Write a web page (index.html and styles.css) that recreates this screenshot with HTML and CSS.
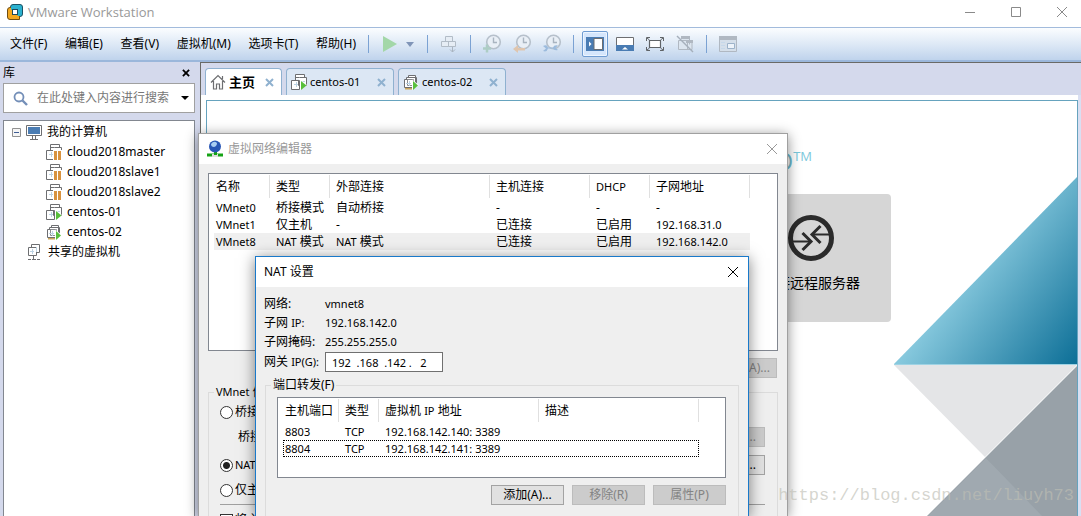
FILE: index.html
```html
<!DOCTYPE html>
<html lang="zh-CN">
<head>
<meta charset="utf-8">
<title>VMware Workstation</title>
<link rel="stylesheet" href="styles.css">
</head>
<body>
<svg class="defs" aria-hidden="true">
  <symbol id="vm" viewBox="0 0 16 16">
    <path d="M4.500 6V.5h9v3M8.500 3.500h7v8h-8v-5M4.500 3.500h4M.5 6.500h8v9h-8z" fill="#fff" stroke="#6d6e71"/>
    <path d="M3 10.500h4M5.500 8v5M10 7.500h4" stroke="#bcd3e4" fill="none"/>
  </symbol>
  <symbol id="vm-pause" viewBox="0 0 16 16">
    <use href="#vm"/><path d="M7 6h9v10H7z" fill="#fff"/><path d="M8 7h3v9H8zM12 7h3v9h-3z" fill="#d8923e"/>
  </symbol>
  <symbol id="vm-run" viewBox="0 0 16 16">
    <use href="#vm"/><path d="M9 5.500 16 11l-7 5z" fill="#fff"/><path d="M10 7l5.500 4.500L10 16z" fill="#58bf3c"/>
  </symbol>
  <symbol id="vm-team" viewBox="0 0 16 16">
    <path d="M5.500 3.500v-2h7v9M3.500 5.500v-2h10v8M1.500 5.500h8v8h-8z" fill="#fff" stroke="#6d6e71"/>
    <path d="M4.500 5.500h6v6h-6z" fill="none" stroke="#8a8c8f"/>
    <path d="M3 9.500h5M6.500 7v5" stroke="#bcd3e4"/><path d="M2 14h7v1.500H2z" fill="#c9a55c"/>
    <path d="M9 5.500 16 11l-7 5z" fill="#fff"/><path d="M10 7l5 4.500L10 16z" fill="#58bf3c"/>
  </symbol>
  <symbol id="clock" viewBox="0 0 20 20">
    <circle cx="11.500" cy="8" r="6.800" fill="#e9eff6" stroke="#b6c0cb" stroke-width="1.600"/><path d="M11.500 3.500V8.500H15" fill="none" stroke="#a9b4c0" stroke-width="1.400"/>
  </symbol>
  <symbol id="cross" viewBox="0 0 12 12"><path d="M1 1l10 10M11 1L1 11" fill="none" stroke="currentColor"/></symbol>
  <symbol id="fat-cross" viewBox="0 0 9 9"><path d="M1 1l7 7M8 1L1 8" fill="none" stroke="currentColor" stroke-width="2"/></symbol>
</svg>

<div class="app">
  <header class="titlebar">
    <svg class="logo" viewBox="0 0 16 16" width="16" height="16">
      <rect x="3.500" y=".5" width="12" height="12" rx="2.500" fill="#2bb1cf" stroke="#1b5264"/>
      <path d="M3 3.500h9.500V15.500H3q-2.500 0-2.500-2.500V6q0-2.500 2.500-2.500z" fill="#f3a81f" stroke="#704d12"/>
      <path d="M4 4.500h8V12" fill="none" stroke="#2bb1cf" stroke-width="3"/>
      <rect x="5.500" y="5.500" width="5" height="5" fill="#fff" stroke="#1d4a5d"/>
    </svg>
    <h1>VMware Workstation</h1>
    <div class="wincontrols">
      <button aria-label="最小化"><svg width="12" height="12"><path d="M1 6.500h10" stroke="currentColor"/></svg></button>
      <button aria-label="最大化"><svg width="12" height="12"><path d="M1.500 1.500h9v9h-9z" fill="none" stroke="currentColor"/></svg></button>
      <button aria-label="关闭"><svg width="12" height="12"><use href="#cross"/></svg></button>
    </div>
  </header>

  <div class="toolbar">
    <nav class="menu">
      <button>文件(F)</button><button>编辑(E)</button><button>查看(V)</button><button>虚拟机(M)</button><button>选项卡(T)</button><button>帮助(H)</button>
    </nav>
    <i class="sep"></i>
    <button class="tool" aria-label="启动"><svg width="16" height="18"><path d="M1 1l14 8L1 17z" fill="#a3d7a8"/></svg></button>
    <button class="tool caret" aria-label="电源选项"><svg width="8" height="5"><path d="M0 0h8L4 5z" fill="#8095b8"/></svg></button>
    <i class="sep"></i>
    <button class="tool" aria-label="发送按键"><svg width="18" height="18"><path d="M5.500 1.500h7v5h-7zM1.500 6.500h7v5h-7zM8.500 6.500h7v5h-7z" fill="#e6edf5" stroke="#b2bcc7"/><path d="M12.500 12v5M10 14.500l2.500 2.500 2.500-2.500" fill="none" stroke="#a9b4c0"/></svg></button>
    <i class="sep"></i>
    <button class="tool" aria-label="拍摄快照"><svg width="20" height="20"><use href="#clock"/><path d="M1 14.500h8M5 10.500v8" stroke="#adcdc5" stroke-width="2.500"/></svg></button>
    <button class="tool" aria-label="恢复快照"><svg width="20" height="20"><use href="#clock"/><path d="M1 15l5-4v3h7v2.500H6V19z" fill="#dfc5ae"/></svg></button>
    <button class="tool" aria-label="管理快照"><svg width="20" height="20"><use href="#clock"/><path d="M1 12q4-2 5 1.500h5q1-3 5-2l-2.500 2.500 2.500 2q-4 1-5-1.500H6q-1 4-5 2.500l3-2.500z" fill="#9cbbdd"/></svg></button>
    <i class="sep"></i>
    <button class="tool active" aria-label="显示库"><svg width="18" height="14"><path d="M0 0h18v14H0z" fill="#4a7cb3"/><path d="M8 1.500h8.500v11H8z" fill="#fff" stroke="#6d6e71" stroke-width="1"/><path d="M3 4.500l2.500 2.500L3 9.500z" fill="#fff"/></svg></button>
    <button class="tool" aria-label="显示缩略图"><svg width="18" height="14"><path d="M.5.500h17v13H.5z" fill="#fff" stroke="#6d6e71"/><path d="M0 8h18v6H0z" fill="#4a7cb3"/><path d="M6 12.500L9 10l3 2.500z" fill="#fff"/></svg></button>
    <button class="tool" aria-label="全屏"><svg width="18" height="14"><path d="M3.500 3.500h11v7h-11z" fill="#fff" stroke="#606468" stroke-width="1.200"/><path d="M.5 4V.5H4M14 .5h3.500V4M.5 10v3.500H4M14 13.500h3.500V10M1 1l2.500 2M17 1l-2.500 2M1 13l2.500-2M17 13l-2.500-2" fill="none" stroke="#606468"/></svg></button>
    <button class="tool" aria-label="Unity"><svg width="18" height="18"><path d="M5.500 4V1.500h8v8M2.500 5.500h9v9h-9zM9 5.500h7v9h-5" fill="#dce5ef" stroke="#b0b8c2"/><path d="M5 1h9v3H5zM10 5h7v3h-7z" fill="#b0b8c2"/><path d="M1 1l16 16" stroke="#a5afbb" stroke-width="1.500"/></svg></button>
    <i class="sep"></i>
    <button class="tool" aria-label="控制台视图"><svg width="18" height="16"><path d="M.5.500h17v15H.5z" fill="#d5dfea" stroke="#b0b8c2"/><path d="M0 0h18v4H0z" fill="#b0b8c2"/><path d="M2 6.500h4M2 9.500h4M2 12.500h4" stroke="#c6d8ea"/><path d="M8.500 7.500h7v5h-7z" fill="#edf3fa" stroke="#9db3ca"/></svg></button>
  </div>

  <div class="workspace">
    <aside class="library">
      <div class="library-head"><h2>库</h2><button aria-label="关闭库"><svg width="8" height="8" viewBox="0 0 9 9"><use href="#fat-cross"/></svg></button></div>
      <div class="search">
        <svg width="15" height="15"><circle cx="6" cy="6" r="4.500" fill="none" stroke="#748fb8" stroke-width="1.800"/><path d="M9.500 9.500l4.500 4.500" stroke="#748fb8" stroke-width="2.400"/></svg>
        <input type="text" aria-label="搜索" placeholder="在此处键入内容进行搜索">
        <button aria-label="搜索选项"><svg width="8" height="4"><path d="M0 0h8L4 4z"/></svg></button>
      </div>
      <ul class="tree">
        <li class="root"><button class="expander" aria-label="折叠"><svg width="9" height="9"><path d="M.5.500h8v8h-8z" fill="#f5f5f5" stroke="#919191"/><path d="M2 4.500h5" stroke="#3e5c93"/></svg></button><svg width="16" height="16"><path d="M.5 1.500h15v10H.5z" fill="#fff" stroke="#6d6e71"/><path d="M2 3h12v7H2z" fill="#4a7cb3"/><path d="M6.500 12v3M9.500 12v3M4 15.500h8" stroke="#6d6e71"/></svg>我的计算机</li>
        <li class="child"><svg width="16" height="16"><use href="#vm-pause"/></svg>cloud2018master</li>
        <li class="child"><svg width="16" height="16"><use href="#vm-pause"/></svg>cloud2018slave1</li>
        <li class="child"><svg width="16" height="16"><use href="#vm-pause"/></svg>cloud2018slave2</li>
        <li class="child"><svg width="16" height="16"><use href="#vm-run"/></svg>centos-01</li>
        <li class="child"><svg width="16" height="16"><use href="#vm-team"/></svg>centos-02</li>
        <li class="root shared"><svg width="16" height="16"><path d="M4.500 3V.5h8v8h-3M1.500 3.500h8v8h-8z" fill="#fff" stroke="#6d6e71"/><path d="M3 7.500h4M5.500 5v5M9.500 3v5" stroke="#bcd3e4"/><path d="M6.500 12v3M1 15.500h3M5 15.500h4M10 15.500h3" stroke="#6d6e71"/></svg>共享的虚拟机</li>
      </ul>
    </aside>

    <main class="main">
      <div class="tabs">
        <div class="tab home-tab"><svg width="16" height="16"><path d="M1 8.500L8 1.500l7 7M3.500 7v8h3v-5h3v5h3V7M12.500 5V2" fill="none" stroke="#6d6e71" stroke-width="1.200"/></svg><span>主页</span><button aria-label="关闭主页"><svg width="9" height="9"><use href="#fat-cross"/></svg></button></div>
        <div class="tab"><svg width="16" height="16"><use href="#vm-run"/></svg><span>centos-01</span><button aria-label="关闭 centos-01"><svg width="9" height="9"><use href="#fat-cross"/></svg></button></div>
        <div class="tab"><svg width="16" height="16"><use href="#vm-team"/></svg><span>centos-02</span><button aria-label="关闭 centos-02"><svg width="9" height="9"><use href="#fat-cross"/></svg></button></div>
      </div>
      <div class="page">
        <section class="home">
          <div class="brand">PRO<sup>TM</sup></div>
          <button class="tile">
            <svg width="48" height="48"><circle cx="24" cy="24" r="20.500" fill="none" stroke="#2b2b2b" stroke-width="5"/><path d="M5 27.500h18M43 20.500H25" stroke="#2b2b2b" stroke-width="2"/><path d="M15.500 19l8.500 8.500-8.500 8.500M33.500 12L25 20.500l8.500 8.500" fill="none" stroke="#2b2b2b" stroke-width="3"/></svg>
            连接远程服务器
          </button>
          <svg class="art" width="183" height="600">
            <defs>
              <linearGradient id="sea" gradientUnits="userSpaceOnUse" x1="60" y1="110" x2="183" y2="200"><stop offset="0" stop-color="#86c8dd"/><stop offset="1" stop-color="#066a93"/></linearGradient>
              <clipPath id="low"><path d="M92 281L411 600h-639z"/></clipPath>
            </defs>
            <path d="M183 0v187H0z" fill="url(#sea)"/><path d="M0 187.500h183" stroke="#9fd3e4"/>
            <path d="M0 188h183L91 280z" fill="#e4e5e7"/>
            <path d="M183 189v411h-411z" fill="#98a1a8"/><path d="M92 281L-228 600H400z" fill="#a0a9b0" clip-path="url(#low)"/>
          </svg>
        </section>
      </div>
    </main>
  </div>

  <section class="dialog editor" aria-label="虚拟网络编辑器">
    <header class="dialog-title"><svg width="16" height="18"><path d="M0 13.500h16v3H0z" fill="#15a315"/><path d="M5 14h6v3H5z" fill="#ddd"/><path d="M7 11h3v4H7z" fill="#15a315"/><circle cx="8" cy="6.500" r="6" fill="#2856b5"/><path d="M4 4q3-4 6-1 0 3-3 4-3 0-3-3z" fill="#a9cdf2"/></svg><h2>虚拟网络编辑器</h2><button aria-label="关闭"><svg width="12" height="12"><use href="#cross"/></svg></button></header>
    <div class="dialog-body">
      <div class="list networks">
        <table>
          <colgroup><col class="w56"><col class="w60"><col class="w160"><col class="w100"><col class="w60"><col class="w100"></colgroup>
          <thead><tr><th>名称</th><th>类型</th><th>外部连接</th><th>主机连接</th><th class="latin">DHCP</th><th>子网地址</th></tr></thead>
          <tbody>
            <tr><td class="latin">VMnet0</td><td>桥接模式</td><td>自动桥接</td><td>-</td><td>-</td><td>-</td></tr>
            <tr><td class="latin">VMnet1</td><td>仅主机</td><td>-</td><td>已连接</td><td>已启用</td><td class="latin">192.168.31.0</td></tr>
            <tr class="selected"><td class="latin">VMnet8</td><td><span class="latin">NAT</span> 模式</td><td><span class="latin">NAT</span> 模式</td><td>已连接</td><td>已启用</td><td class="latin">192.168.142.0</td></tr>
          </tbody>
        </table>
      </div>
      <div class="actions"><button class="btn" disabled>更改设置(A)...</button></div>
      <fieldset>
        <legend><span class="latin">VMnet 信息</span></legend>
        <div class="mode r24"><label><input type="radio" name="mode">桥接模式</label></div>
        <div class="mode r26"><label class="indent" for="bridge">桥接到</label><button id="bridge" class="btn" disabled>自动设置...</button></div>
        <div class="mode r30"><label><input type="radio" name="mode" checked><span class="latin">NAT 模式</span></label><button class="btn"><span class="latin">NAT</span> 设置...</button></div>
        <div class="mode r20"><label><input type="radio" name="mode">仅主机模式</label></div>
        <hr>
        <div class="mode r20"><label><input type="checkbox">将主机适配器连接到此网络</label></div>
      </fieldset>
    </div>
  </section>

  <section class="dialog nat" aria-label="NAT 设置">
    <header class="dialog-title"><h2>NAT 设置</h2><button aria-label="关闭"><svg width="12" height="12"><use href="#cross"/></svg></button></header>
    <div class="dialog-body">
      <div class="fields">
        <span>网络:</span><span class="latin">vmnet8</span>
        <span>子网 <span class="latin">IP:</span></span><span class="latin">192.168.142.0</span>
        <span>子网掩码:</span><span class="latin">255.255.255.0</span>
        <label for="gateway">网关 <span class="latin">IP(G):</span></label><input id="gateway" type="text" value="192  .168  .142 .   2">
      </div>
      <fieldset>
        <legend>端口转发(F)</legend>
        <div class="list ports">
          <table>
            <colgroup><col class="w56"><col class="w40"><col class="w160"><col class="w160"></colgroup>
            <thead><tr><th>主机端口</th><th>类型</th><th>虚拟机 <span class="latin">IP</span> 地址</th><th>描述</th></tr></thead>
            <tbody class="latin">
              <tr><td>8803</td><td>TCP</td><td>192.168.142.140: 3389</td><td></td></tr>
              <tr class="focused"><td>8804</td><td>TCP</td><td>192.168.142.141: 3389</td><td></td></tr>
            </tbody>
          </table>
        </div>
        <div class="actions"><button class="btn">添加(A)...</button><button class="btn" disabled>移除(R)</button><button class="btn" disabled>属性(P)</button></div>
      </fieldset>
    </div>
  </section>

  <div class="watermark">https://blog.csdn.net/liuyh73</div>
</div>
</body>
</html>
```
FILE: styles.css
```css
* { box-sizing: border-box; }
body { margin: 0; font: 12px/16px "Noto Sans", "Noto Sans CJK SC", sans-serif; color: #000; }
h1, h2 { margin: 0; font-size: 12px; font-weight: 400; }
button { margin: 0; padding: 0; border: 0; background: none; font: inherit; color: inherit; white-space: nowrap; }
input { font: inherit; color: inherit; }
svg { display: block; flex: none; }
.defs { position: absolute; width: 0; height: 0; }
.latin { font-size: 11px; }

.app { position: relative; display: flex; flex-direction: column; height: 100vh; overflow: hidden; background: #d4d9ec; }

.titlebar { display: flex; align-items: center; flex: none; height: 27px; padding: 0 13px 4px 7px; background: #fff; color: #999; }
.titlebar h1 { flex: 1; margin-left: 5px; font-family: "Open Sans", sans-serif; font-size: 13px; }
.wincontrols { display: flex; gap: 34px; color: #8a8a8a; }

.toolbar { display: flex; align-items: center; flex: none; height: 35px; border-top: 1px solid #a2bbdc; border-bottom: 2px solid #9bb7db; background: linear-gradient(#fbfdff, #dbe7f5 55%, #bfd3ec); }
.menu { display: flex; justify-content: space-between; width: 356px; padding-left: 10px; }
.sep { flex: none; width: 1px; height: 18px; margin: 0 6px; background: #7ba2d3; }
.menu + .sep { margin-left: 12px; }
.tool { display: flex; align-items: center; justify-content: center; flex: none; width: 30px; height: 26px; }
.tool.caret { width: 16px; padding-right: 6px; }
.tool.active { width: 26px; margin: 0 2px; border: 1px solid #6f9cd2; border-radius: 2px; background: #d5e6fc; box-shadow: inset 0 0 0 1px #edf5ff; }

.workspace { display: flex; flex: 1; min-height: 0; }
.library { display: flex; flex-direction: column; flex: none; width: 200px; padding: 0 5px 0 3px; }
.library-head { display: flex; align-items: center; justify-content: space-between; height: 21px; padding-right: 5px; }
.search { display: flex; align-items: center; flex: none; height: 30px; padding: 0 5px 0 9px; border: 1px solid #a0a0a0; background: #fff; }
.search input { flex: 1; min-width: 0; margin-left: 9px; padding: 0; border: 0; outline: 0; }
.search input::placeholder { color: #777; opacity: 1; }
.tree { flex: 1; margin: 7px 0 0; padding: 1px 0 0; border: 1px solid #828790; border-bottom: 0; background: #fff; list-style: none; }
.tree li { display: flex; align-items: center; gap: 5px; height: 20px; white-space: nowrap; }
.tree .root { padding-left: 8px; }
.tree .shared { padding-left: 23px; }
.tree .child { padding-left: 42px; }

.main { display: flex; flex-direction: column; flex: 1; min-width: 0; border-top: 1px solid #6a6a66; border-left: 1px solid #6a6a66; }
.tabs { display: flex; align-items: flex-end; flex: none; gap: 4px; height: 32px; padding-left: 4px; }
.tab { display: flex; align-items: center; width: 108px; height: 27px; padding: 0 7px 0 4px; border: 1px solid #8fb1d0; border-bottom: 0; border-radius: 4px 4px 0 0; background: #dce7f4; font-size: 11px; }
.tab span { flex: 1; margin-left: 3px; }
.tab button { color: #8fb1cf; }
.home-tab { width: 77px; background: #fff; font-size: 13px; font-weight: 700; }
.page { display: flex; flex: 1; padding: 5px 3px 0 5px; background: linear-gradient(90deg, #fff calc(100% - 3px), #d9dff2 0); }
.home { position: relative; flex: 1; overflow: hidden; border: 1px solid #66a3be; border-bottom: 0; background: #fff; }
.brand { width: 605px; height: 93px; padding-top: 48px; font: 24px/24px "Open Sans", sans-serif; color: #6fb9cc; text-align: right; }
.brand sup { font-size: 13px; line-height: 0; color: #7cc8db; }
.tile { display: flex; flex-direction: column; align-items: center; gap: 12px; width: 160px; height: 128px; margin-left: 524px; padding-top: 20px; border-radius: 4px; background: #d6d6d6; font-size: 14px; line-height: 18px; }
.art { position: absolute; top: 76px; right: 0; }

.dialog { position: absolute; display: flex; flex-direction: column; bottom: 0; overflow: hidden; border: 1px solid #a0a0a0; border-bottom: 0; background: #efefef; }
.dialog-title { display: flex; align-items: center; flex: none; height: 30px; padding: 0 9px; background: #fff; }
.dialog-title h2 { flex: 1; }
.editor { top: 133px; left: 198px; width: 590px; box-shadow: 0 2px 12px rgba(0, 0, 0, .45); }
.editor .dialog-title { padding-left: 8px; color: #999; }
.editor .dialog-title h2 { margin-left: 5px; }
.editor .dialog-body { padding: 9px 9px 0; }
.nat { top: 256px; left: 255px; width: 494px; border-color: #1979ca; box-shadow: 0 2px 14px rgba(0, 0, 0, .5); }
.nat .dialog-title { padding-left: 8px; }
.nat .dialog-body { padding: 7px 9px 0 8px; }

.list { padding-left: 5px; border: 1px solid #828790; background: #fff; }
.networks { height: 178px; }
.ports { height: 81px; }
table { border-collapse: collapse; table-layout: fixed; width: 0; }
.w40 { width: 40px; }
.w56 { width: 56px; }
.w60 { width: 60px; }
.w100 { width: 100px; }
.w160 { width: 160px; }
th, td { height: 17px; padding: 0 0 0 6px; font-weight: 400; text-align: left; white-space: nowrap; }
th { height: 25px; background: linear-gradient(#e0e0e0, #e0e0e0) right 1px / 1px 23px no-repeat; }
th:first-child, td:first-child { padding-left: 2px; }
.selected { background: #efefef; }
.focused { outline: 1px dotted #000; outline-offset: -1px; }

.actions { display: flex; justify-content: flex-end; gap: 8px; padding: 7px 1px 6px 0; }
.btn { min-width: 73px; height: 20px; padding: 0 6px; border: 1px solid #a3a3a3; background: #e1e1e1; line-height: 16px; }
.btn:disabled { border-color: #bcbcbc; background: #ccc; color: #838383; }
fieldset { min-width: 0; margin: 0; padding: 0 12px 80px 11px; border: 1px solid #dcdcdc; }
legend { height: 16px; margin-left: -6px; padding: 0 2px; }
.mode { display: flex; align-items: center; justify-content: space-between; }
.mode label { display: flex; align-items: center; gap: 2px; white-space: nowrap; }
.mode .indent { padding-left: 18px; }
.mode .btn { padding: 0 8px; }
.mode input { appearance: none; width: 13px; height: 13px; margin: 0; border: 1px solid #333; background: #fff; }
.mode input[type="radio"] { border-radius: 50%; }
.mode input[type="radio"]:checked { background: radial-gradient(circle, #222 0 3px, #fff 4px); }
.r20 { height: 20px; }
.r24 { height: 24px; }
.r26 { height: 26px; }
.r30 { height: 30px; }
hr { height: 1px; margin: 4px 0 5px; border: 0; background: #a0a0a0; }

.fields { display: grid; grid-template-columns: 61px 118px; grid-template-rows: 19px 19px 19px 22px; align-items: center; }
.fields label, .fields > span { white-space: nowrap; }
.fields input { width: 118px; height: 20px; padding: 0 6px; border: 1px solid #707070; background: #fff; font-size: 11px; }
.nat fieldset { margin: 4px 0 0 1px; padding-top: 4px; }
.nat .actions { padding: 7px 0 0; }

.watermark { position: absolute; right: 7px; bottom: 10px; font: 17px/20px "Liberation Mono", monospace; color: rgba(190, 190, 180, .65); }
```
